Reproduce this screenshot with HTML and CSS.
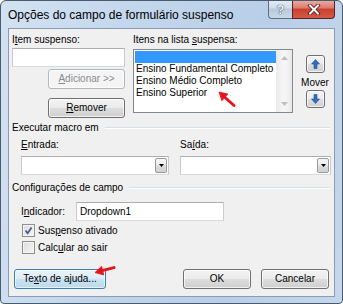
FILE: index.html
```html
<!DOCTYPE html>
<html lang="pt">
<head>
<meta charset="utf-8">
<title>Opções do campo de formulário suspenso</title>
<link rel="stylesheet" href="styles.css">
</head>
<body>
<div class="window">
  <div class="titlebar">
    <span class="title">Opções do campo de formulário suspenso</span>
    <div class="caption">
      <div class="cap help">?</div>
      <div class="cap close">
        <svg width="14" height="11" viewBox="0 0 14 11"><path d="M3 1.5 L11 9.5 M11 1.5 L3 9.5" stroke="#4a1414" stroke-width="3.6" stroke-linecap="square" fill="none"/><path d="M3 1.5 L11 9.5 M11 1.5 L3 9.5" stroke="#ffffff" stroke-width="2" stroke-linecap="square" fill="none"/></svg>
      </div>
    </div>
  </div>
  <div class="client">
    <div class="top">
      <div class="col-item">
        <div class="lbl">I<u>t</u>em suspenso:</div>
        <div class="textbox"></div>
        <div class="btn side disabled"><u>A</u>dicionar &gt;&gt;</div>
        <div class="btn side remove"><u>R</u>emover</div>
      </div>
      <div class="col-list">
        <div class="lbl">Itens na lista <u>s</u>uspensa:</div>
        <div class="listbox">
          <div class="items">
            <div class="item sel"></div>
            <div class="item">Ensino Fundamental Completo</div>
            <div class="item">Ensino Médio Completo</div>
            <div class="item">Ensino Superior</div>
          </div>
          <div class="vscroll">
            <div class="sarrow"><svg width="7" height="4" viewBox="0 0 7 4"><path d="M0 4 L3.5 0 L7 4 Z" fill="#bfbfbf"/></svg></div>
            <div class="strack"></div>
            <div class="sarrow"><svg width="7" height="4" viewBox="0 0 7 4"><path d="M0 0 L3.5 4 L7 0 Z" fill="#bfbfbf"/></svg></div>
          </div>
        </div>
      </div>
      <div class="col-move">
        <div class="btn spin up">
          <svg width="9" height="10" viewBox="0 0 9 10"><path d="M4.5 0.5 L8.5 5 L6 5 L6 9.5 L3 9.5 L3 5 L0.5 5 Z" fill="#2f6fc6" stroke="#1d4f96" stroke-width="0.6"/></svg>
        </div>
        <div class="mover">Mover</div>
        <div class="btn spin down">
          <svg width="9" height="10" viewBox="0 0 9 10"><path d="M4.5 9.5 L8.5 5 L6 5 L6 0.5 L3 0.5 L3 5 L0.5 5 Z" fill="#2f6fc6" stroke="#1d4f96" stroke-width="0.6"/></svg>
        </div>
      </div>
    </div>

    <div class="group">Executar macro em</div>
    <div class="macro">
      <div class="field in">
        <div class="lbl"><u>E</u>ntrada:</div>
        <div class="combo"><div class="drop"><svg width="5" height="3" viewBox="0 0 5 3"><path d="M0 0 L5 0 L2.5 3 Z" fill="#000"/></svg></div></div>
      </div>
      <div class="field out">
        <div class="lbl">Sa<u>í</u>da:</div>
        <div class="combo"><div class="drop"><svg width="5" height="3" viewBox="0 0 5 3"><path d="M0 0 L5 0 L2.5 3 Z" fill="#000"/></svg></div></div>
      </div>
    </div>

    <div class="group">Configurações de campo</div>
    <div class="indicator">
      <div class="ind-lbl">I<u>n</u>dicador:</div>
      <div class="textbox ind-input">Dropdown1</div>
    </div>
    <div class="check first">
      <div class="box"><svg width="11" height="11" viewBox="0 0 11 11"><path d="M2.5 5.5 L4.6 8.2 L8.6 2.4" stroke="#3f5894" stroke-width="1.7" fill="none"/></svg></div>
      <span>Sus<u>p</u>enso ativado</span>
    </div>
    <div class="check second">
      <div class="box"></div>
      <span>Calc<u>u</u>lar ao sair</span>
    </div>

    <div class="footer">
      <div class="btn help-text">Te<u>x</u>to de ajuda...</div>
      <div class="btn ok">OK</div>
      <div class="btn cancel">Cancelar</div>
    </div>
  </div>

  <svg class="arrow arrow-list" width="22" height="20" viewBox="0 0 22 20">
    <path d="M9.5 8 L19 16.5" stroke="#e8141c" stroke-width="3" stroke-linecap="round"/>
    <path d="M4 3 L12.9 5.1 L6.9 11.7 Z" fill="#e8141c" stroke="#e8141c" stroke-width="0.8" stroke-linejoin="round"/>
  </svg>
  <svg class="arrow arrow-help" width="24" height="15" viewBox="0 0 24 15">
    <path d="M9 7.6 L21 4.6" stroke="#e8141c" stroke-width="3" stroke-linecap="round"/>
    <path d="M2 9.6 L8.6 3.25 L10.8 11.95 Z" fill="#e8141c" stroke="#e8141c" stroke-width="0.8" stroke-linejoin="round"/>
  </svg>
</div>
</body>
</html>
```

FILE: styles.css
```css
html, body {
  margin: 0;
  padding: 0;
  background: #ffffff;
}

.window {
  position: relative;
  width: 343px;
  height: 304px;
  box-sizing: border-box;
  border: 1px solid #4b5b6e;
  border-radius: 6px 6px 4px 4px;
  background: linear-gradient(100deg, #d3e2f2 0%, #c2d6ec 35%, #b9cfe7 70%, #c4d7ec 100%);
  display: flex;
  flex-direction: column;
  overflow: hidden;
  font-family: "Liberation Sans", Arial, sans-serif;
}

.titlebar {
  height: 27px;
  display: flex;
  justify-content: space-between;
  align-items: flex-start;
}

.title {
  font-size: 12px;
  line-height: 14px;
  margin-left: 7px;
  margin-top: 7px;
  color: #000;
  white-space: nowrap;
}

.caption {
  display: flex;
  margin-top: -1px;
  margin-right: 7px;
}

.cap {
  height: 19px;
  box-sizing: border-box;
  display: flex;
  align-items: center;
  justify-content: center;
  border: 1px solid #5f6f84;
  border-top: none;
}

.help {
  width: 24px;
  border-right: none;
  border-radius: 0 0 0 4px;
  background: linear-gradient(#e4edf7 0%, #cfdcea 45%, #b7c9dd 50%, #c9d9ea 100%);
  color: #eef3f8;
  font-size: 13px;
  font-weight: bold;
  text-shadow: 0 0 1px #2c3a4a, 0 0 1px #2c3a4a;
}

.close {
  width: 43px;
  border-color: #5a2424;
  border-radius: 0 0 4px 0;
  background: linear-gradient(#eab0a5 0%, #dc7b6c 45%, #c8402f 50%, #d55a45 100%);
}

.client {
  margin: 0 7px;
  height: 269px;
  box-sizing: border-box;
  border: 1px solid #8b9cb0;
  background: #f0f0f0;
  font-size: 10px;
  line-height: 12px;
  color: #000;
  display: flex;
  flex-direction: column;
}

.lbl {
  height: 12px;
  white-space: nowrap;
}

.top {
  display: flex;
  padding-left: 3px;
  margin-top: 5px;
}

.col-item {
  width: 113px;
  display: flex;
  flex-direction: column;
}

.textbox {
  height: 19px;
  box-sizing: border-box;
  border: 1px solid #abadb3;
  border-left-color: #c8cbd1;
  border-right-color: #c8cbd1;
  border-bottom-color: #d7dbe0;
  background: #ffffff;
}

.col-item .textbox {
  margin-top: 2px;
}

.btn {
  height: 20px;
  box-sizing: border-box;
  border: 1px solid #707070;
  border-radius: 3px;
  background: linear-gradient(#f3f3f3 0%, #ebebeb 48%, #dddddd 52%, #cfcfcf 100%);
  box-shadow: inset 0 0 0 1px rgba(255, 255, 255, 0.7);
  display: flex;
  align-items: center;
  justify-content: center;
  white-space: nowrap;
}

.side {
  width: 77px;
  align-self: flex-end;
}

.disabled {
  margin-top: 2px;
  color: #8b8b8b;
  border-color: #b2b7ba;
  background: #f4f4f4;
}

.disabled u {
  text-decoration-color: #8b8b8b;
}

.remove {
  margin-top: 9px;
}

.col-list {
  width: 160px;
  margin-left: 8px;
  display: flex;
  flex-direction: column;
}

.listbox {
  margin-top: 3px;
  height: 64px;
  box-sizing: border-box;
  border: 1px solid #828790;
  background: #ffffff;
  display: flex;
}

.items {
  flex: 1;
  padding: 1px 0 0 1px;
}

.item {
  height: 12px;
  line-height: 12px;
  padding-left: 1px;
  white-space: nowrap;
}

.item.sel {
  background: #3399ff;
}

.vscroll {
  width: 16px;
  display: flex;
  flex-direction: column;
  background: linear-gradient(90deg, #e9e9e9, #f5f5f5 40%, #f5f5f5 60%, #e9e9e9);
}

.sarrow {
  height: 16px;
  display: flex;
  align-items: center;
  justify-content: center;
}

.strack {
  flex: 1;
}

.col-move {
  width: 28px;
  margin-left: 8px;
  display: flex;
  flex-direction: column;
  align-items: center;
}

.spin {
  width: 19px;
  height: 18px;
}

.spin.up {
  margin-top: 21px;
}

.mover {
  margin-top: 4px;
  height: 12px;
}

.spin.down {
  margin-top: 1px;
}

.group {
  display: flex;
  align-items: center;
  height: 12px;
  padding-left: 3px;
  white-space: nowrap;
}

.group::after {
  content: "";
  flex: 1;
  height: 0;
  border-top: 1px solid #d5dfe5;
  border-bottom: 1px solid #ffffff;
  margin-left: 6px;
  margin-right: 4px;
}

.top + .group {
  margin-top: 4px;
}

.macro + .group {
  margin-top: 7px;
}

.macro {
  display: flex;
  padding-left: 12px;
  margin-top: 5px;
}

.field {
  display: flex;
  flex-direction: column;
}

.field.in {
  width: 148px;
}

.field.out {
  width: 151px;
  margin-left: 11px;
}

.combo {
  margin-top: 5px;
  height: 19px;
  box-sizing: border-box;
  border: 1px solid #abadb3;
  border-left-color: #c8cbd1;
  border-right-color: #c8cbd1;
  border-bottom-color: #d7dbe0;
  background: #ffffff;
  display: flex;
  justify-content: flex-end;
  align-items: center;
  padding-right: 1px;
}

.drop {
  width: 12px;
  height: 15px;
  box-sizing: border-box;
  border: 1px solid #9a9a9a;
  border-radius: 2px;
  background: linear-gradient(#f6f6f6 0%, #ececec 48%, #dcdcdc 52%, #d2d2d2 100%);
  display: flex;
  align-items: center;
  justify-content: center;
}

.indicator {
  display: flex;
  align-items: center;
  padding-left: 12px;
  margin-top: 8px;
}

.ind-lbl {
  width: 55px;
  white-space: nowrap;
}

.ind-input {
  width: 148px;
  padding-left: 3px;
  line-height: 17px;
}

.check {
  display: flex;
  align-items: center;
  height: 13px;
  padding-left: 13px;
}

.check.first {
  margin-top: 3px;
}

.check.second {
  margin-top: 4px;
}

.box {
  width: 13px;
  height: 13px;
  box-sizing: border-box;
  border: 1px solid #8e8f8f;
  background: linear-gradient(135deg, #dcdcdc, #f6f6f6);
  box-shadow: inset 0 0 0 1px #f4f4f4;
  margin-right: 3px;
  display: flex;
  align-items: center;
  justify-content: center;
}

.footer {
  display: flex;
  padding-left: 5px;
  margin-top: 15px;
}

.help-text {
  width: 92px;
  margin-right: auto;
  border-color: #3c7fb1;
  background: linear-gradient(#eaf4fa 0%, #dcecf6 48%, #c9e2f1 52%, #bcd9ec 100%);
  box-shadow: inset 0 0 0 1px rgba(255, 255, 255, 0.6);
}

.ok, .cancel {
  width: 68px;
}

.cancel {
  margin-left: 10px;
  margin-right: 5px;
}

.arrow {
  position: absolute;
}

.arrow-list {
  left: 214px;
  top: 88px;
}

.arrow-help {
  left: 92px;
  top: 262px;
}
```
